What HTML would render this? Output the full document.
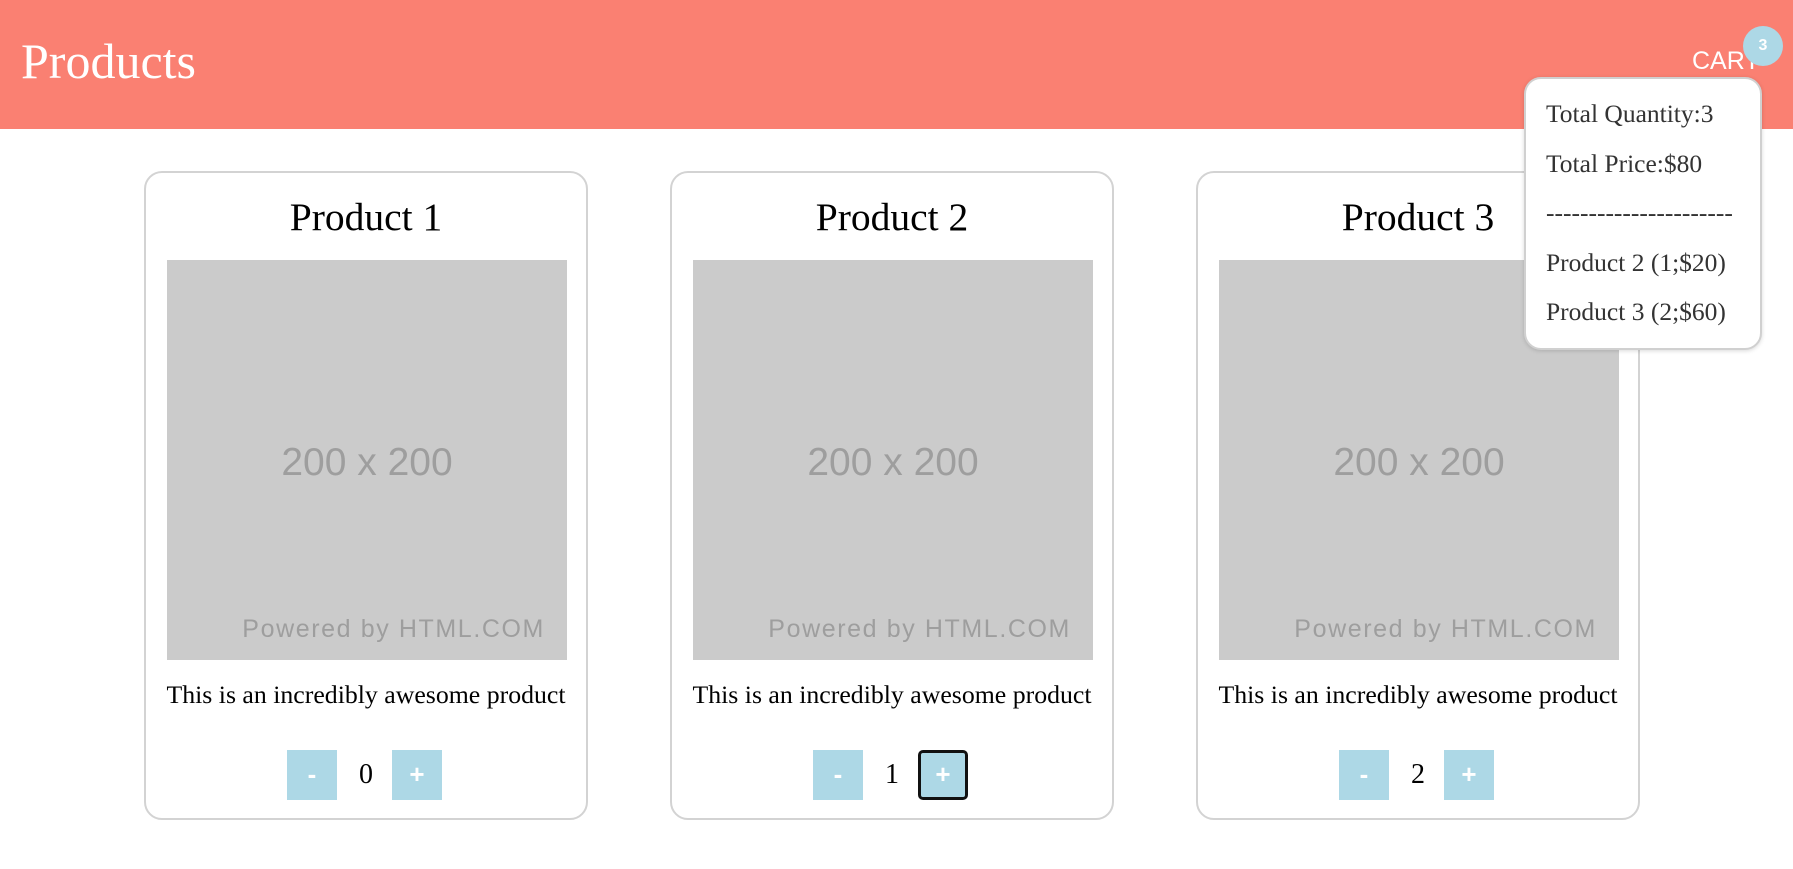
<!DOCTYPE html>
<html><head><style>
*{box-sizing:border-box;margin:0;padding:0}
body{width:1793px;height:869px;background:#fff;font-family:"Liberation Serif",serif;position:relative;overflow:hidden}
.hdr{position:absolute;left:0;top:0;width:1793px;height:129px;background:#fa8072}
.hdr h1{position:absolute;left:21px;top:36px;font-weight:normal;font-size:50px;color:#fff;line-height:1}
.cart{position:absolute;left:1692px;top:49px;font-family:"Liberation Sans",sans-serif;font-size:25px;color:#fff;line-height:1}
.badge{position:absolute;left:1743px;top:26px;width:40px;height:40px;border-radius:50%;background:#add8e6;color:#fff;font-family:"Liberation Sans",sans-serif;font-weight:bold;font-size:16px;text-align:center;line-height:40px}
.card{position:absolute;top:171px;width:444px;height:649px;border:2px solid #d3d3d3;border-radius:18px}
.card h2{position:absolute;top:22px;left:0;width:100%;text-align:center;font-weight:normal;font-size:39.5px;line-height:44px}
.img{position:absolute;left:21px;top:87px;width:400px;height:400px;background:#cbcbcb;font-family:"Liberation Sans",sans-serif;color:#9e9e9e}
.img .a{position:absolute;top:181px;width:100%;text-align:center;font-size:39px}
.img .b{position:absolute;right:22px;top:355px;font-size:25px;letter-spacing:1.6px}
.desc{position:absolute;top:507px;left:0;width:100%;text-align:center;font-size:25.8px}
.ctl{position:absolute;top:577px;left:0;width:100%;height:50px}
.btn{position:absolute;top:0;width:50px;height:50px;background:#add8e6;color:#fff;font-family:"Liberation Sans",sans-serif;font-weight:bold;font-size:26px;text-align:center;line-height:48px}
.num{position:absolute;top:0;width:40px;text-align:center;font-size:28px;line-height:50px}
.focus{border:3px solid #111;border-radius:5px;line-height:43px}
.dd{position:absolute;left:1524px;top:77px;width:238px;height:273px;background:#fff;border:2px solid #d0d0d0;border-radius:17px;box-shadow:0 1px 4px rgba(0,0,0,.15);color:#333;font-size:25.5px}
.dd div{position:absolute;left:20px}
</style></head><body>
<div class="hdr"><h1>Products</h1><div class="cart">CART</div><div class="badge">3</div></div>

<div class="card" style="left:144px"><h2>Product 1</h2><div class="img"><div class="a">200 x 200</div><div class="b">Powered by HTML.COM</div></div><div class="desc">This is an incredibly awesome product</div>
<div class="ctl"><div class="btn" style="left:141px">-</div><div class="num" style="left:200px">0</div><div class="btn" style="left:246px">+</div></div></div>

<div class="card" style="left:670px"><h2>Product 2</h2><div class="img"><div class="a">200 x 200</div><div class="b">Powered by HTML.COM</div></div><div class="desc">This is an incredibly awesome product</div>
<div class="ctl"><div class="btn" style="left:141px">-</div><div class="num" style="left:200px">1</div><div class="btn focus" style="left:246px">+</div></div></div>

<div class="card" style="left:1196px"><h2>Product 3</h2><div class="img"><div class="a">200 x 200</div><div class="b">Powered by HTML.COM</div></div><div class="desc">This is an incredibly awesome product</div>
<div class="ctl"><div class="btn" style="left:141px">-</div><div class="num" style="left:200px">2</div><div class="btn" style="left:246px">+</div></div></div>

<div class="dd">
<div style="top:20px">Total Quantity:3</div>
<div style="top:70px">Total Price:$80</div>
<div style="top:119px">----------------------</div>
<div style="top:169px">Product 2 (1;$20)</div>
<div style="top:218px">Product 3 (2;$60)</div>
</div>
</body></html>
